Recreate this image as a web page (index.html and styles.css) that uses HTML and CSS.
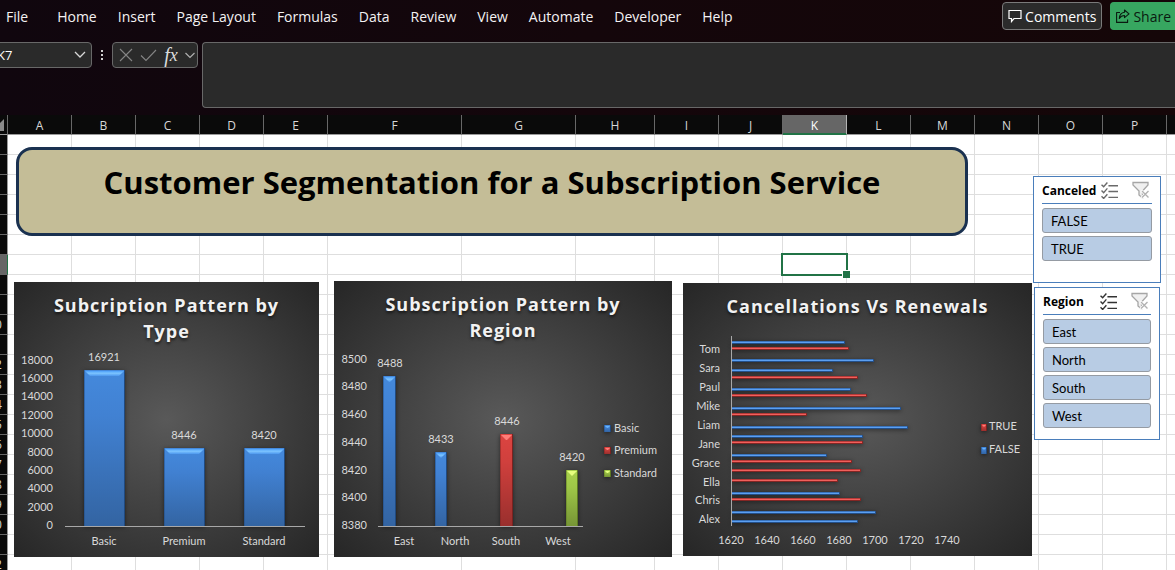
FILE: index.html
```html
<!DOCTYPE html>
<html lang="en">
<head>
<meta charset="utf-8">
<title>Customer Segmentation</title>
<link rel="stylesheet" href="styles.css">
</head>
<body>
<svg class="defs" aria-hidden="true">
  <defs>
    <linearGradient id="blue" x1="0" y1="0" x2="0" y2="1"><stop offset="0" stop-color="#4489dc"/><stop offset="0.3" stop-color="#4181d2"/><stop offset="1" stop-color="#3364a2"/></linearGradient>
    <linearGradient id="red" x1="0" y1="0" x2="0" y2="1"><stop offset="0" stop-color="#dc4441"/><stop offset="0.3" stop-color="#d0403d"/><stop offset="1" stop-color="#992f2d"/></linearGradient>
    <linearGradient id="green" x1="0" y1="0" x2="0" y2="1"><stop offset="0" stop-color="#a8d14c"/><stop offset="0.3" stop-color="#9fc748"/><stop offset="1" stop-color="#769535"/></linearGradient>
    <linearGradient id="shine" x1="0" y1="0" x2="0" y2="1"><stop offset="0" stop-color="#4da0fa"/><stop offset="0.45" stop-color="#7cc4ff"/><stop offset="1" stop-color="#4d97ee"/></linearGradient>
    <symbol id="multi" viewBox="0 0 16 16"><path d="M0.500 2.500l2 2L6 0.500M0.500 8l2 2L6 6M0.500 13.500l2 2L6 11.500M7 3.500h9M7 9h9M7 14.500h9" fill="none" stroke="currentColor" stroke-width="1.300"/></symbol>
    <symbol id="clear" viewBox="0 0 18 18"><path d="M1 1.500h15v2.500L10.500 10v7L7 14v-4L1 4z" fill="#f0f0f0" stroke="#a6a6a6" stroke-width="1.300"/><path d="M9.500 9.500l7.500 7.500M17 9.500L9.500 17" stroke="#fff" stroke-width="3"/><path d="M10 10l6.500 6.500M16.500 10L10 16.500" stroke="#b2b2b2" stroke-width="1.400"/></symbol>
  </defs>
</svg>

<header class="ribbon">
  <nav class="tabs" aria-label="Ribbon">
    <a class="tab tab-file" href="#">File</a>
    <a class="tab" href="#">Home</a>
    <a class="tab" href="#">Insert</a>
    <a class="tab" href="#">Page Layout</a>
    <a class="tab" href="#">Formulas</a>
    <a class="tab" href="#">Data</a>
    <a class="tab" href="#">Review</a>
    <a class="tab" href="#">View</a>
    <a class="tab" href="#">Automate</a>
    <a class="tab" href="#">Developer</a>
    <a class="tab" href="#">Help</a>
  </nav>
  <div class="actions">
    <button class="action comments" type="button">
      <svg width="14" height="14" viewBox="0 0 14 14" aria-hidden="true"><path d="M1 1.500h12v8H6L3.500 12.500v-3H1z" fill="none" stroke="currentColor" stroke-width="1.200"/></svg>
      Comments
    </button>
    <button class="action share" type="button">
      <svg width="14" height="14" viewBox="0 0 14 14" aria-hidden="true"><path d="M4 3.500H0.600v9.900h11V10.500M8.500 1l4.500 3.800-4.500 3.800V6.500C6 6.500 4.500 7.500 3.300 9.500 3.500 6 5.500 3.500 8.500 3.200z" fill="none" stroke="currentColor" stroke-width="1.100" stroke-linejoin="round"/></svg>
      Share
    </button>
  </div>
</header>

<div class="formula-bar">
  <div class="name-box">
    <input class="name-input" type="text" value="K7" aria-label="Name box">
    <button class="bare" type="button" aria-label="Show names"><svg width="12" height="8" viewBox="0 0 12 8"><path d="M1 1l5 5 5-5" fill="none" stroke="#d8d8d8" stroke-width="1.300"/></svg></button>
  </div>
  <span class="grip" aria-hidden="true"><i></i><i></i><i></i></span>
  <div class="fx-box">
    <button class="bare" type="button" aria-label="Cancel"><svg width="14" height="14" viewBox="0 0 14 14"><path d="M1 1l12 12M13 1L1 13" stroke="#858585" stroke-width="1.100"/></svg></button>
    <button class="bare" type="button" aria-label="Enter"><svg width="17" height="13" viewBox="0 0 17 13"><path d="M1 6.500L6 11.500 16 1" fill="none" stroke="#858585" stroke-width="1.100"/></svg></button>
    <button class="bare fx" type="button" aria-label="Insert function"><span class="fx-f">f</span><span class="fx-x">x</span></button>
    <button class="bare" type="button" aria-label="Function list"><svg width="10" height="7" viewBox="0 0 10 7"><path d="M0.500 1L5 5.500 9.500 1" fill="none" stroke="#b0b0b0" stroke-width="1.200"/></svg></button>
  </div>
  <textarea class="formula" aria-label="Formula"></textarea>
</div>

<main class="sheet">
  <table class="grid" id="grid"></table>

  <div class="selection"></div>
  <h1 class="banner">Customer Segmentation for a Subscription Service</h1>

  <section class="chart chart-type" aria-label="Subcription Pattern by Type">
    <h2 class="chart-title">Subcription Pattern by<br>Type</h2>
    <svg class="plot" viewBox="0 0 305 275">
      <g class="end">
        <text x="39" y="82">18000</text><text x="39" y="100">16000</text><text x="39" y="118">14000</text><text x="39" y="137">12000</text><text x="39" y="155">10000</text><text x="39" y="174">8000</text><text x="39" y="192">6000</text><text x="39" y="210">4000</text><text x="39" y="229">2000</text><text x="39" y="247">0</text>
      </g>
      <g class="bars" data-bars="70,88,41,156,blue 150,166,41,78,blue 230,166,41,78,blue"></g>
      <rect class="axis" x="51" y="244" width="240" height="1"/>
      <g class="mid">
        <text x="90" y="79">16921</text><text x="170" y="157">8446</text><text x="250" y="157">8420</text>
        <text x="90" y="263">Basic</text><text x="170" y="263">Premium</text><text x="250" y="263">Standard</text>
      </g>
    </svg>
  </section>

  <section class="chart chart-region" aria-label="Subscription Pattern by Region">
    <h2 class="chart-title">Subscription Pattern by<br>Region</h2>
    <svg class="plot" viewBox="0 0 338 276">
      <g class="end">
        <text x="33" y="82">8500</text><text x="33" y="109">8480</text><text x="33" y="137">8460</text><text x="33" y="165">8440</text><text x="33" y="193">8420</text><text x="33" y="220">8400</text><text x="33" y="248">8380</text>
      </g>
      <g class="bars" data-bars="49,95,13,150,blue 101,171,12,74,blue 166,153,13,92,red 232,189,12,56,green 270,144,7,7,blue 270,166,7,7,red 270,189,7,7,green"></g>
      <rect class="axis" x="44" y="245" width="205" height="1"/>
      <g class="mid">
        <text x="56" y="86">8488</text><text x="107" y="162">8433</text><text x="173" y="144">8446</text><text x="238" y="180">8420</text>
        <text x="70" y="264">East</text><text x="121" y="264">North</text><text x="172" y="264">South</text><text x="224" y="264">West</text>
      </g>
      <g><text x="280" y="151">Basic</text><text x="280" y="173">Premium</text><text x="280" y="196">Standard</text></g>
    </svg>
  </section>

  <section class="chart chart-cancel" aria-label="Cancellations Vs Renewals">
    <h2 class="chart-title">Cancellations Vs Renewals</h2>
    <svg class="plot" viewBox="0 0 349 273">
      <g class="end">
        <text x="37" y="70">Tom</text><text x="37" y="89">Sara</text><text x="37" y="108">Paul</text><text x="37" y="127">Mike</text><text x="37" y="146">Liam</text><text x="37" y="165">Jane</text><text x="37" y="184">Grace</text><text x="37" y="203">Ella</text><text x="37" y="221">Chris</text><text x="37" y="240">Alex</text>
      </g>
      <g class="lines" data-lines="58,162,blue 64,166,red 76,191,blue 86,150,blue 93,175,red 105,168,blue 111,184,red 124,218,blue 130,124,red 143,225,blue 152,180,blue 158,180,red 171,144,blue 177,169,red 186,178,red 196,155,red 209,157,blue 215,178,red 228,193,blue 237,175,blue"></g>
      <g class="bars" data-bars="298,141,6,7,red 298,164,6,7,blue"></g>
      <rect class="axis" x="48" y="53" width="1" height="190"/>
      <g class="mid">
        <text x="48" y="261">1620</text><text x="84" y="261">1640</text><text x="120" y="261">1660</text><text x="156" y="261">1680</text><text x="192" y="261">1700</text><text x="228" y="261">1720</text><text x="264" y="261">1740</text>
      </g>
      <g><text x="306" y="147">TRUE</text><text x="306" y="170">FALSE</text></g>
    </svg>
  </section>

  <section class="slicer slicer-canceled" aria-label="Canceled">
    <div class="slicer-head">
      <h3 class="slicer-title">Canceled</h3>
      <button class="bare multi" type="button" aria-label="Multi-select"><svg width="17" height="17"><use href="#multi"/></svg></button>
      <button class="bare" type="button" aria-label="Clear filter"><svg width="18" height="18"><use href="#clear"/></svg></button>
    </div>
    <button class="item" type="button">FALSE</button>
    <button class="item" type="button">TRUE</button>
  </section>

  <section class="slicer slicer-region" aria-label="Region">
    <div class="slicer-head">
      <h3 class="slicer-title">Region</h3>
      <button class="bare multi dark" type="button" aria-label="Multi-select"><svg width="17" height="17"><use href="#multi"/></svg></button>
      <button class="bare" type="button" aria-label="Clear filter"><svg width="18" height="18"><use href="#clear"/></svg></button>
    </div>
    <button class="item" type="button">East</button>
    <button class="item" type="button">North</button>
    <button class="item" type="button">South</button>
    <button class="item" type="button">West</button>
  </section>
</main>
<script src="sheet.js"></script>
</body>
</html>
```

FILE: styles.css
```css
* { box-sizing: border-box; }

body {
  margin: 0;
  height: 100vh;
  display: flex;
  flex-direction: column;
  overflow: hidden;
  background: linear-gradient(90deg, #10060e, #14060b 50%, #150608);
  color: #fff;
  font-family: "Open Sans", "Noto Sans", sans-serif;
}

button, input, textarea { font: inherit; color: inherit; }
h1, h2, h3 { margin: 0; }
.defs { position: absolute; width: 0; height: 0; }

.bare {
  display: flex;
  align-items: center;
  padding: 0;
  border: 0;
  background: none;
}

/* Ribbon */
.ribbon {
  display: flex;
  justify-content: space-between;
  height: 34px;
  font-size: 14px;
}
.tabs {
  display: flex;
  align-items: center;
  gap: 21px;
  padding-left: 6px;
  line-height: 36px;
}
.tab { color: #f4f2f3; text-decoration: none; white-space: nowrap; }
.tab-file { margin-right: 8px; }
.actions { display: flex; gap: 8px; padding-top: 2px; }
.action {
  display: flex;
  align-items: center;
  gap: 3px;
  height: 28px;
  padding: 0 5px;
  border: 1px solid #7a7a7a;
  border-radius: 4px;
  background: #2b2b2b;
}
.share {
  padding-right: 4px;
  border-color: #37a660;
  border-right: 0;
  border-radius: 4px 0 0 4px;
  background: #37a660;
  color: #0a1a10;
}

/* Formula bar */
.formula-bar {
  display: flex;
  align-items: flex-start;
  height: 81px;
  padding-top: 8px;
}
.name-box, .fx-box {
  display: flex;
  align-items: center;
  height: 26px;
  border: 1px solid #686868;
  border-radius: 4px;
  background: #2a2a2a;
}
.name-box { width: 100px; margin-left: -8px; padding: 0 5px 0 4px; }
.name-input {
  flex: 1;
  min-width: 0;
  padding: 0;
  border: 0;
  background: none;
  font-size: 13px;
}
.grip {
  display: flex;
  flex-direction: column;
  gap: 2px;
  width: 20px;
  padding: 8px 0 0 9px;
}
.grip i { width: 2px; height: 2px; background: #d0d0d0; }
.fx-box { width: 86px; margin-right: 4px; padding: 0 2px 0 6px; justify-content: space-between; }
.fx {
  font-family: "Liberation Serif", serif;
  font-style: italic;
  color: #dcdcdc;
  line-height: 20px;
}
.fx-f { font-size: 20px; }
.fx-x { font-size: 18px; }
.formula {
  flex: 1;
  height: 66px;
  padding: 4px;
  border: 1px solid #686868;
  border-right: 0;
  border-radius: 4px 0 0 4px;
  background: #2a2a2a;
  resize: none;
}

/* Sheet */
.sheet {
  position: relative;
  flex: 1;
  min-height: 0;
  overflow: hidden;
  background: #fff;
  color: #000;
  font-family: Lato, "Open Sans", sans-serif;
}
.grid {
  border-collapse: separate;
  border-spacing: 0;
  table-layout: fixed;
  width: 1231px;
}
.col-head { width: 8px; }
.col { width: 64px; }
.col-f { width: 134px; }
.col-g { width: 114px; }
.col-h { width: 79px; }
.grid th, .grid td {
  height: 20px;
  padding: 0;
  border-right: 1px solid #dedede;
  border-bottom: 1px solid #dedede;
}
.grid th {
  overflow: hidden;
  border-color: #686868;
  background: #0a0a0a;
  color: #d8d8d8;
  font: 12px/19px "Open Sans", "Noto Sans", sans-serif;
}
.grid thead th { padding-top: 2px; border-bottom-color: #9a9a9a; line-height: 17px; }
.grid thead .corner { padding-top: 0; }
.grid tbody th { border-right-color: #9a9a9a; }
.grid thead .active { background: #666; color: #fff; border-right-color: #b4b4b4; box-shadow: inset 0 -1px #217346; border-bottom-color: #217346; }
.grid tbody .active { background: #666; border-right-color: #217346; }
.row-label { display: flex; justify-content: flex-end; }
.row-number { flex: none; width: 24px; }
.corner svg { display: block; }

.selection {
  position: absolute;
  left: 781px;
  top: 138px;
  width: 67px;
  height: 23px;
  border: 2px solid #217346;
}
.selection::after {
  content: "";
  position: absolute;
  right: -4px;
  bottom: -4px;
  width: 7px;
  height: 7px;
  border: 1px solid #fff;
  border-right: 0;
  border-bottom: 0;
  background: #217346;
}

.banner {
  position: absolute;
  left: 16px;
  top: 32px;
  width: 952px;
  height: 89px;
  padding-top: 8px;
  border: 3px solid #1a3150;
  border-radius: 16px;
  background: #c4bd97;
  text-align: center;
  font-family: "Open Sans", "Noto Sans", sans-serif;
  font-size: 31px;
  line-height: 48px;
  white-space: nowrap;
}

/* Charts */
.chart {
  position: absolute;
  background: radial-gradient(ellipse farthest-corner, #595959, #262626);
}
.chart-type { left: 14px; top: 167px; width: 305px; height: 275px; }
.chart-region { left: 334px; top: 166px; width: 338px; height: 276px; }
.chart-cancel { left: 683px; top: 168px; width: 349px; height: 273px; }
.chart-title {
  position: absolute;
  inset: 10px 0 auto;
  color: #f2f2f2;
  text-align: center;
  font-family: "Open Sans", "Noto Sans", sans-serif;
  font-size: 18px;
  line-height: 26px;
  letter-spacing: 1px;
  text-shadow: 0 2px 3px rgba(0, 0, 0, 0.6);
}
.plot { display: block; width: 100%; height: 100%; font-size: 11px; fill: #d9d9d9; }
.mid { text-anchor: middle; }
.end { text-anchor: end; }
.axis { fill: #a8a8a8; }
.bar { filter: drop-shadow(0 1px 2px rgba(0, 0, 0, 0.5)); }

/* Slicers */
.slicer {
  position: absolute;
  display: flex;
  flex-direction: column;
  gap: 3px;
  padding: 0 8px;
  border: 1px solid #4a7ebb;
  background: #fff;
}
.slicer-canceled { left: 1033px; top: 61px; width: 128px; height: 107px; }
.slicer-region { left: 1034px; top: 172px; width: 126px; height: 153px; }
.slicer-head {
  display: flex;
  align-items: center;
  height: 27px;
  margin-bottom: 1px;
  padding-right: 2px;
  border-bottom: 1px solid #4a7ebb;
}
.slicer-title {
  flex: 1;
  font-family: "Open Sans", "Noto Sans", sans-serif;
  font-size: 12px;
}
.multi { margin-right: 14px; color: #6a6a6a; }
.dark { color: #333; }
.item {
  height: 25px;
  padding: 0 8px;
  border: 1px solid #959ba3;
  border-radius: 3px;
  background: #b8cce4;
  text-align: left;
  font-size: 13px;
  line-height: 20px;
}
```

FILE: sheet.js
```js
const grid = document.getElementById("grid");
const letters = [..."ABCDEFGHIJKLMNOPQ"];
const special = { F: " col-f", G: " col-g", H: " col-h" };

let html = "<colgroup><col class='col-head'>";
html += letters.map((c) => `<col class="col${special[c] || ""}">`).join("");
html += "</colgroup><thead><tr><th class='corner' aria-label='Select all'>";
html += "<svg width='7' height='19'><path d='M4 4v12H-8z' fill='#8a8a8a'/></svg></th>";
html += letters.map((c) => `<th scope="col"${c === "K" ? ' class="active"' : ""}>${c}</th>`).join("");
html += "</tr></thead><tbody>";
for (let r = 1; r <= 22; r++) {
  html += `<tr><th scope="row"${r === 7 ? ' class="active"' : ""}><div class="row-label"><span class="row-number">${r}</span></div></th>`;
  html += "<td></td>".repeat(letters.length) + "</tr>";
}
grid.innerHTML = html + "</tbody>";

const tones = {
  blue: { light: "url(#shine)", dark: "#204a80" },
  red: { light: "#ff7d78", dark: "#7c2220" },
  green: { light: "#e6ff7e", dark: "#5d7a22" },
};

// Bevelled columns: x, y, width, height, tone
document.querySelectorAll("[data-bars]").forEach((g) => {
  g.innerHTML = g.dataset.bars.split(" ").map((spec) => {
    const [x, y, w, h, tone] = spec.split(",");
    const [X, Y, W, H] = [x, y, w, h].map(Number);
    const d = Math.min(5, Math.floor(W / 2) - 1);
    const t = tones[tone];
    return `<g class="bar"><rect x="${X}" y="${Y}" width="${W}" height="${H}" fill="url(#${tone})"/>
      <rect x="${X + W - 1}" y="${Y}" width="1" height="${H}" fill="${t.dark}"/>
      <rect x="${X}" y="${Y}" width="1" height="${H}" fill="${t.dark}" opacity="0.5"/>
      <path d="M${X + 1} ${Y + 1}H${X + W - 1}L${X + W - 1 - d} ${Y + 1 + d}H${X + 1 + d}z" fill="${t.light}"/></g>`;
  }).join("");
});

// Thin horizontal bars: y, right end, tone
const thin = {
  blue: ["#3a74bd", "#5c9ff0", "#24508a"],
  red: ["#b93a38", "#f0605c", "#842624"],
};
document.querySelectorAll("[data-lines]").forEach((g) => {
  g.innerHTML = g.dataset.lines.split(" ").map((spec) => {
    const [y, end, tone] = spec.split(",");
    const [a, b, c] = thin[tone];
    const w = end - 49;
    return `<g class="bar"><rect x="49" y="${y}" width="${w}" height="3" fill="${a}"/>
      <rect x="49" y="${+y + 1}" width="${w - 1}" height="1" fill="${b}"/>
      <rect x="49" y="${+y + 2}" width="${w}" height="1" fill="${c}"/>
      <rect x="${end - 1}" y="${y}" width="1" height="3" fill="${c}"/></g>`;
  }).join("");
});
```
